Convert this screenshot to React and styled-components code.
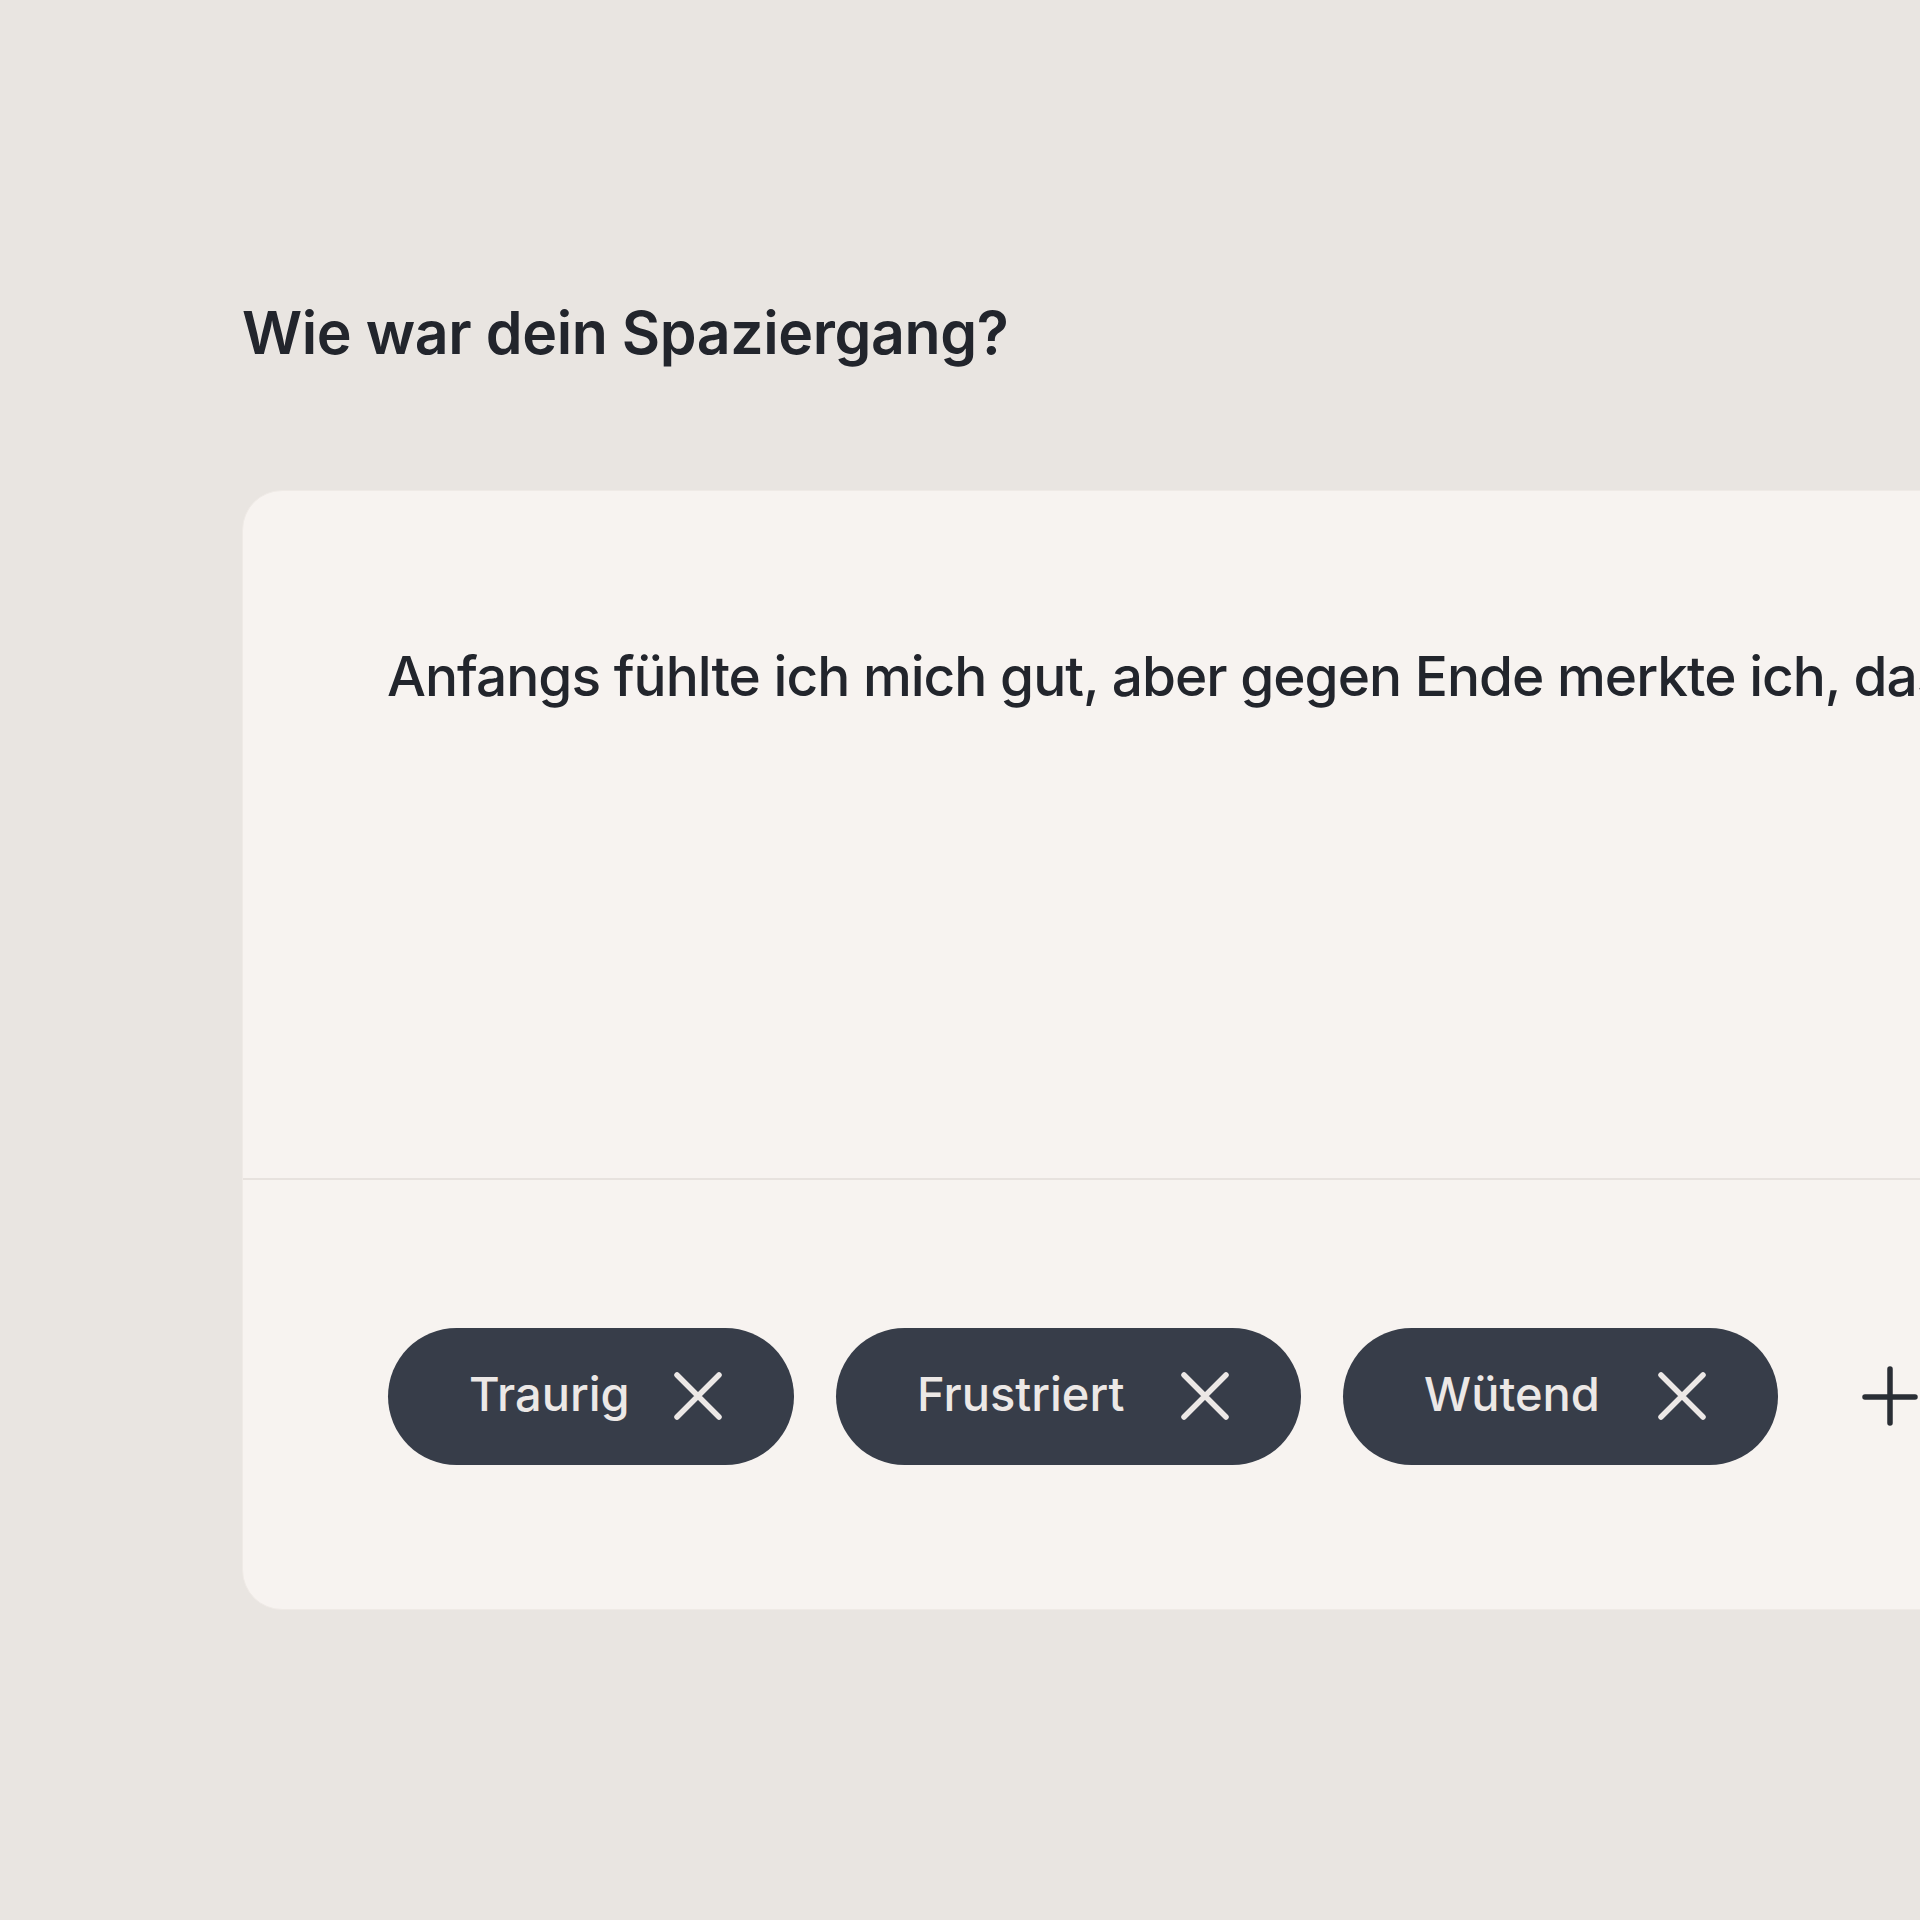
import React from "react";
import styled, { createGlobalStyle } from "styled-components";

const GlobalStyle = createGlobalStyle`
	html, body {
		margin: 0;
		padding: 0;
		background: #e9e5e1;
	}
	body {
		font-family: Inter, "Noto Sans", sans-serif;
		overflow: hidden;
	}
`;

const Page = styled.div`
	width: 1920px;
	height: 1920px;
	overflow: hidden;
	box-sizing: border-box;
	padding: 303px 0 0 242px;
	background: #e9e5e1;
`;

const Question = styled.h1`
	margin: 0;
	font-size: 59px;
	line-height: 1;
	font-weight: 600;
	letter-spacing: -0.4px;
	color: #22252c;
`;

const Card = styled.div`
	margin-top: 128px;
	width: 1800px;
	background: #f7f3f0;
	border-radius: 40px;
	border: 1px solid #efeae6;
	overflow: hidden;
`;

//the entry text runs past the right edge like in the app
const Entry = styled.div`
	box-sizing: border-box;
	height: 689px;
	padding: 158px 0 0 144px;
	font-size: 55px;
	line-height: 1;
	font-weight: 500;
	letter-spacing: -1px;
	color: #22252c;
	white-space: nowrap;
	border-bottom: 2px solid #e7e2de;
`;

const TagRow = styled.div`
	box-sizing: border-box;
	height: 429px;
	padding: 3px 0 0 145px;
	display: flex;
	align-items: center;
	gap: 42px;
`;

const Tag = styled.div`
	width: ${(p) => p.width}px;
	height: 137px;
	box-sizing: border-box;
	padding: 0 72px 0 81px;
	border-radius: 69px;
	background: #373d49;
	display: flex;
	align-items: center;
	justify-content: space-between;
	color: #ece8e6;
	font-size: 47px;
	font-weight: 500;
	letter-spacing: 0;
	white-space: nowrap;
`;

const TagLabel = styled.span`
	position: relative;
	top: -3px;
`;

const AddButton = styled.div`
	margin-left: 42px;
	display: flex;
	align-items: center;
	color: #2a2e35;
`;

const CloseIcon = () => (
	<svg width="48" height="48" viewBox="0 0 48 48" fill="none">
		<path
			d="M3 3 L45 45 M45 3 L3 45"
			stroke="#ece8e6"
			strokeWidth="5.5"
			strokeLinecap="round"
		/>
	</svg>
);

const PlusIcon = () => (
	<svg width="56" height="60" viewBox="0 0 56 60" fill="none">
		<path
			d="M28 3 L28 57 M3 31 L53 31"
			stroke="currentColor"
			strokeWidth="5.5"
			strokeLinecap="round"
		/>
	</svg>
);

const tags = [
	{ label: "Traurig", width: 406 },
	{ label: "Frustriert", width: 465 },
	{ label: "Wütend", width: 435 },
];

const App = () => {
	return (
		<>
			<GlobalStyle />
			<Page>
				<Question>Wie war dein Spaziergang?</Question>
				<Card>
					<Entry>
						Anfangs fühlte ich mich gut, aber gegen Ende merkte ich, dass ich
						müde wurde.
					</Entry>
					<TagRow>
						{tags.map((tag) => (
							<Tag key={tag.label} width={tag.width}>
								<TagLabel>{tag.label}</TagLabel>
								<CloseIcon />
							</Tag>
						))}
						<AddButton>
							<PlusIcon />
						</AddButton>
					</TagRow>
				</Card>
			</Page>
		</>
	);
};

export default App;
